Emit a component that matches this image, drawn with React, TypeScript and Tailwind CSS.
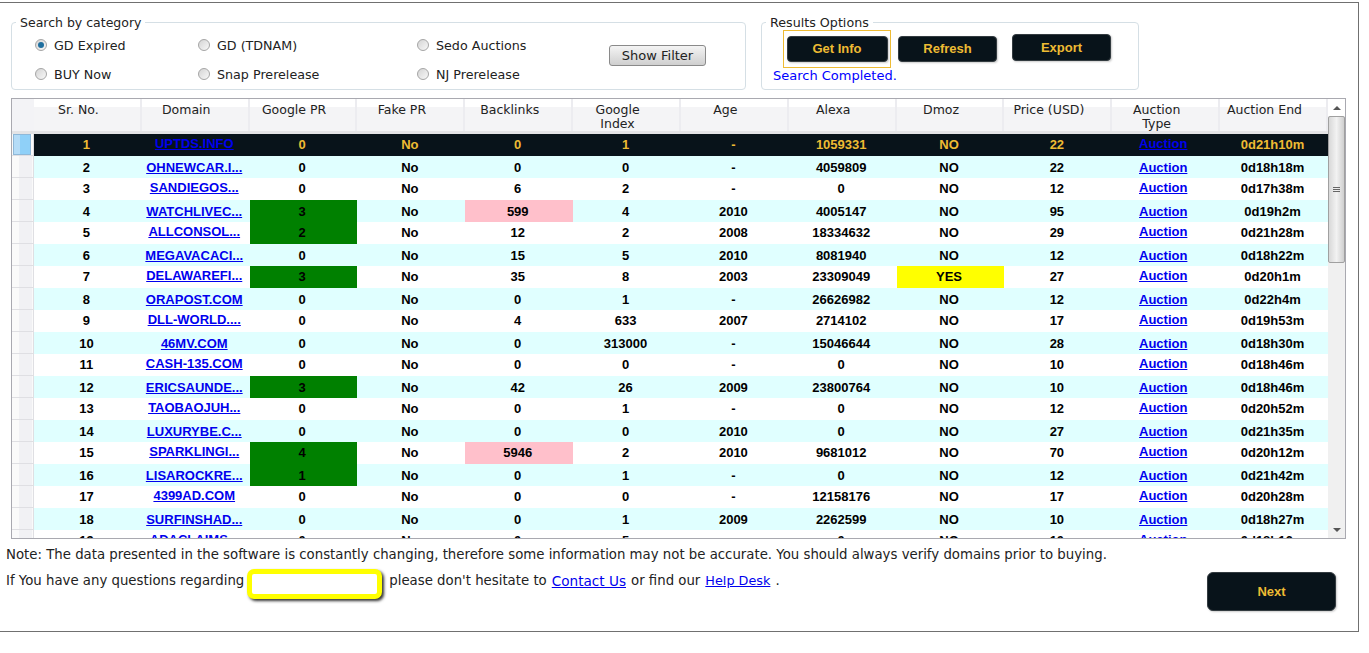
import React from "react";

const sans = "font-['DejaVu_Sans',Verdana,sans-serif]";

type Row = {
  no: number;
  domain: string;
  pr: string;
  fake?: string;
  back: string;
  index: string;
  age: string;
  alexa: string;
  dmoz?: string;
  price: string;
  end: string;
};

const rows: Row[] = [
  { no: 1, domain: "UPTDS.INFO", pr: "0", back: "0", index: "1", age: "-", alexa: "1059331", price: "22", end: "0d21h10m" },
  { no: 2, domain: "OHNEWCAR.I...", pr: "0", back: "0", index: "0", age: "-", alexa: "4059809", price: "22", end: "0d18h18m" },
  { no: 3, domain: "SANDIEGOS...", pr: "0", back: "6", index: "2", age: "-", alexa: "0", price: "12", end: "0d17h38m" },
  { no: 4, domain: "WATCHLIVEC...", pr: "3", back: "599", index: "4", age: "2010", alexa: "4005147", price: "95", end: "0d19h2m" },
  { no: 5, domain: "ALLCONSOL...", pr: "2", back: "12", index: "2", age: "2008", alexa: "18334632", price: "29", end: "0d21h28m" },
  { no: 6, domain: "MEGAVACACI...", pr: "0", back: "15", index: "5", age: "2010", alexa: "8081940", price: "12", end: "0d18h22m" },
  { no: 7, domain: "DELAWAREFI...", pr: "3", back: "35", index: "8", age: "2003", alexa: "23309049", dmoz: "YES", price: "27", end: "0d20h1m" },
  { no: 8, domain: "ORAPOST.COM", pr: "0", back: "0", index: "1", age: "-", alexa: "26626982", price: "12", end: "0d22h4m" },
  { no: 9, domain: "DLL-WORLD....", pr: "0", back: "4", index: "633", age: "2007", alexa: "2714102", price: "17", end: "0d19h53m" },
  { no: 10, domain: "46MV.COM", pr: "0", back: "0", index: "313000", age: "-", alexa: "15046644", price: "28", end: "0d18h30m" },
  { no: 11, domain: "CASH-135.COM", pr: "0", back: "0", index: "0", age: "-", alexa: "0", price: "10", end: "0d18h46m" },
  { no: 12, domain: "ERICSAUNDE...", pr: "3", back: "42", index: "26", age: "2009", alexa: "23800764", price: "10", end: "0d18h46m" },
  { no: 13, domain: "TAOBAOJUH...", pr: "0", back: "0", index: "1", age: "-", alexa: "0", price: "12", end: "0d20h52m" },
  { no: 14, domain: "LUXURYBE.C...", pr: "0", back: "0", index: "0", age: "2010", alexa: "0", price: "27", end: "0d21h35m" },
  { no: 15, domain: "SPARKLINGI...", pr: "4", back: "5946", index: "2", age: "2010", alexa: "9681012", price: "70", end: "0d20h12m" },
  { no: 16, domain: "LISAROCKRE...", pr: "1", back: "0", index: "1", age: "-", alexa: "0", price: "12", end: "0d21h42m" },
  { no: 17, domain: "4399AD.COM", pr: "0", back: "0", index: "0", age: "-", alexa: "12158176", price: "17", end: "0d20h28m" },
  { no: 18, domain: "SURFINSHAD...", pr: "0", back: "0", index: "1", age: "2009", alexa: "2262599", price: "10", end: "0d18h27m" },
  { no: 19, domain: "ADACLAIMS...", pr: "0", back: "0", index: "5", age: "-", alexa: "0", price: "10", end: "0d18h16m" },
];

const headers = [
  "Sr. No.", "Domain", "Google PR", "Fake PR", "Backlinks", "Google Index",
  "Age", "Alexa", "Dmoz", "Price (USD)", "Auction Type", "Auction End",
];

function Radio({ label, checked }: { label: string; checked?: boolean }) {
  return (
    <label className="flex items-center gap-[7px] text-[12.7px] text-[#222]">
      <span className="flex h-[12px] w-[12px] items-center justify-center rounded-full border border-[#a5a5a5] bg-[linear-gradient(135deg,#d4d4d4,#f8f8f8)]">
        {checked && <span className="h-[6px] w-[6px] rounded-full bg-[#1f6f9f]" />}
      </span>
      {label}
    </label>
  );
}

function BlackButton({ label, className }: { label: string; className: string }) {
  return (
    <button className={`flex items-center justify-center rounded-[4px] border border-[#333b40] bg-[#08131a] font-['Liberation_Sans',Arial,sans-serif] text-[13px] font-bold text-[#eebb33] shadow-[1px_1px_2px_#ccc] ${className}`}>
      {label}
    </button>
  );
}

function Cell({ children, className = "" }: { children?: React.ReactNode; className?: string }) {
  return (
    <div className={`flex h-full flex-1 basis-0 items-center justify-center pr-[3px] ${className}`}>
      {children}
    </div>
  );
}

function DataRow({ row }: { row: Row }) {
  const selected = row.no === 1;
  let bg = "bg-white text-black";
  if (selected) bg = "bg-[#08131a] text-[#eebb33]";
  else if (row.no % 2 === 0) bg = "bg-[#e0ffff] text-black";
  // even rows sit a pixel lower in the grid, links in odd rows a pixel higher
  const even = row.no % 2 === 0 ? "pt-[2px]" : "";
  const link = row.no % 2 === 0 ? "pt-[2px]" : "pb-[2px]";
  const highPr = row.pr !== "0";
  const highBack = Number(row.back) > 500;
  const yes = row.dmoz === "YES";

  return (
    <div className="flex h-[22px] shrink-0">
      <div className="flex w-[22px] shrink-0 border-r border-b border-[#dfdfe3] bg-[#fafafa]">
        {selected ? (
          <div className="ml-[1px] h-[21px] w-[18px] border border-[#8fb8d8] bg-[linear-gradient(90deg,#b5dcf7_35%,#8fd0f8_35%)]" />
        ) : (
          <div className="ml-[7px] w-[13px] bg-[#f1f1f4]" />
        )}
      </div>
      <div className={`flex flex-1 font-['Liberation_Sans',Arial,sans-serif] text-[13px] font-bold ${bg}`}>
        <Cell className={even}>{row.no}</Cell>
        <Cell className={link}>
          <a href="#" className="text-[#0000ee] underline">{row.domain}</a>
        </Cell>
        <Cell className={`${even} ${highPr ? "bg-[#008000] !text-black" : ""}`}>{row.pr}</Cell>
        <Cell className={even}>{row.fake ?? "No"}</Cell>
        <Cell className={`${even} ${highBack ? "bg-[#ffc0cb]" : ""}`}>{row.back}</Cell>
        <Cell className={even}>{row.index}</Cell>
        <Cell className={even}>{row.age}</Cell>
        <Cell className={even}>{row.alexa}</Cell>
        <Cell className={`${even} ${yes ? "bg-[#ffff00]" : ""}`}>{row.dmoz ?? "NO"}</Cell>
        <Cell className={even}>{row.price}</Cell>
        <Cell className={link}>
          <a href="#" className="mr-[3px] text-[#0000ee] underline">Auction</a>
        </Cell>
        <Cell className={even}>{row.end}</Cell>
      </div>
    </div>
  );
}

function Scrollbar() {
  return (
    <div className="flex w-[17px] shrink-0 flex-col bg-[#f0f0f0]">
      <div className="flex h-[17px] items-center justify-center bg-white">
        <div className="h-0 w-0 border-x-[4px] border-b-[4px] border-x-transparent border-b-[#555]" />
      </div>
      <div className="flex h-[147px] items-center justify-center rounded-[2px] border border-[#a0a0a0] bg-[linear-gradient(90deg,#d8d8d8,#f2f2f2_50%,#cfcfcf)]">
        <div className="flex w-[7px] flex-col gap-[1px]">
          <div className="h-px bg-[#666]" />
          <div className="h-px bg-[#666]" />
          <div className="h-px bg-[#666]" />
        </div>
      </div>
      <div className="flex-1" />
      <div className="flex h-[17px] items-center justify-center">
        <div className="h-0 w-0 border-x-[4px] border-t-[4px] border-x-transparent border-t-[#555]" />
      </div>
    </div>
  );
}

export default function App() {
  return (
    <div className={`h-[653px] w-[1369px] overflow-hidden bg-white ${sans}`}>
      <div className="mt-[2px] flex h-[630px] w-[1359px] flex-col border-y border-r border-[#707070] px-[11px]">
        <div className="mt-[12px] flex h-[75px] shrink-0 gap-[15px]">
          <fieldset className="relative h-[75px] w-[735px] rounded-[4px] border border-[#d5dfe5] pl-[23px]">
            <legend className="ml-[-19px] px-[4px] text-[12.5px] leading-[15px] text-[#222]">Search by category</legend>
            <div className="mt-[1px] grid grid-cols-[163px_219px_192px_auto] grid-rows-[29px_29px] items-center">
              <Radio label="GD Expired" checked />
              <Radio label="GD (TDNAM)" />
              <Radio label="Sedo Auctions" />
              <button className="row-span-2 mb-[10px] h-[21px] w-[97px] rounded-[3px] border border-[#8a8a8a] bg-[linear-gradient(#f4f4f4,#cfcfcf)] text-[13px] text-[#222]">
                Show Filter
              </button>
              <Radio label="BUY Now" />
              <Radio label="Snap Prerelease" />
              <Radio label="NJ Prerelease" />
            </div>
          </fieldset>
          <fieldset className="relative h-[75px] w-[378px] rounded-[4px] border border-[#d5dfe5] pl-[11px]">
            <legend className="ml-[-7px] px-[4px] text-[12.7px] leading-[15px] text-[#222]">Results Options</legend>
            <div className="ml-[10px] flex items-start">
              <div className="flex h-[38px] w-[108px] items-center justify-center border border-[#eebb33]">
                <BlackButton label="Get Info" className="h-[26px] w-[101px]" />
              </div>
              <BlackButton label="Refresh" className="ml-[7px] mt-[6px] h-[26px] w-[99px]" />
              <BlackButton label="Export" className="ml-[15px] mt-[4px] h-[27px] w-[99px]" />
            </div>
            <div className="text-[13px] leading-[15px] text-[#0000ff]">Search Completed.</div>
          </fieldset>
        </div>

        <div className="mt-[8px] flex h-[441px] w-[1335px] shrink-0 border border-[#a9a9b0]">
          <div className="flex min-w-0 flex-1 flex-col overflow-hidden">
            <div className="flex h-[35px] shrink-0 border-b-[3px] border-[#e4e4e6] bg-white">
              <div className="w-[22px] shrink-0 bg-[#f3f3f6]" />
              <div className="flex flex-1 bg-[linear-gradient(#ffffff_25%,#f4f4f6_25%)] text-[12.5px] leading-[14px] text-[#222]">
                {headers.map((h) => (
                  <div key={h} className="flex flex-1 basis-0 justify-center border-r-2 border-[#ececf0] pr-[17px] pt-[4px] text-center">
                    <span className={h.length > 11 ? "w-[60px]" : "whitespace-nowrap"}>{h}</span>
                  </div>
                ))}
              </div>
            </div>
            {rows.map((r) => (
              <DataRow key={r.no} row={r} />
            ))}
          </div>
          <Scrollbar />
        </div>

        <p className="ml-[-5px] mt-[8px] whitespace-nowrap text-[13.3px] leading-[16px] text-[#222]">
          Note: The data presented in the software is constantly changing, therefore some information may not be accurate. You should always verify domains prior to buying.
        </p>
        <div className="ml-[-5px] mt-[6px] flex items-start text-[13.3px] leading-[16px] text-[#222]">
          <span className="mt-[4px]">If You have any questions regarding</span>
          <input className="ml-[3px] h-[30px] w-[135px] rounded-[7px] border-[5px] border-[#ffff00] bg-white shadow-[2px_2px_3px_#333]" />
          <span className="ml-[7px] mt-[4px]">please don't hesitate to</span>
          <a href="#" className="ml-[5px] mt-[4px] text-[13.6px] text-[#0000ee] underline">Contact Us</a>
          <span className="ml-[5px] mt-[4px]">or find our</span>
          <a href="#" className="ml-[5px] mt-[4px] text-[12.8px] text-[#0000ee] underline">Help Desk</a>
          <span className="ml-[5px] mt-[4px]">.</span>
          <div className="flex-1" />
          <BlackButton label="Next" className="mr-[11px] mt-[3px] h-[39px] w-[129px] rounded-[6px]" />
        </div>
      </div>
    </div>
  );
}
